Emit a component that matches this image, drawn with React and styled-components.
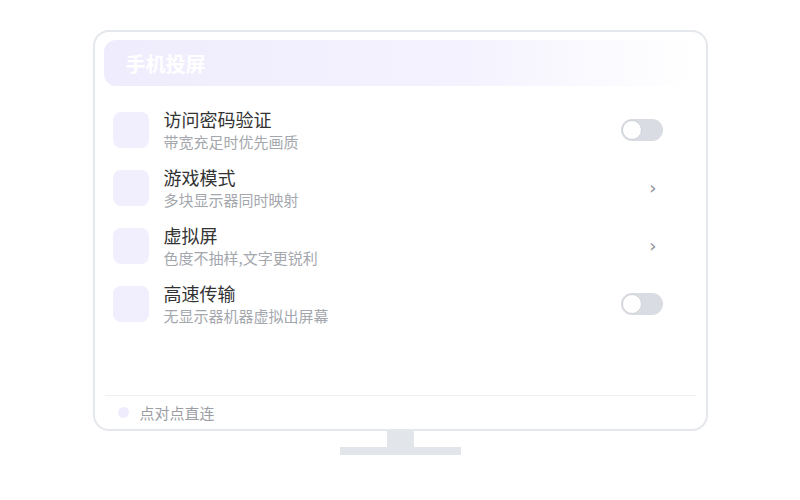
import React from "react";
import styled, { createGlobalStyle } from "styled-components";

const GlobalStyle = createGlobalStyle`
  body {
    margin: 0;
    background: #ffffff;
    font-family: "Noto Sans CJK SC", "Noto Sans", sans-serif;
  }
`;

const Page = styled.div`
  display: flex;
  flex-direction: column;
  align-items: center;
  width: 800px;
  height: 500px;
  padding-top: 30px;
  box-sizing: border-box;
`;

const Monitor = styled.div`
  display: flex;
  flex-direction: column;
  width: 615px;
  height: 401px;
  box-sizing: border-box;
  border: 2px solid #e4e7eb;
  border-radius: 16px;
  background: #ffffff;
  padding-top: 8px;
`;

const Header = styled.div`
  display: flex;
  align-items: center;
  height: 46px;
  margin: 0 10px 0 9px;
  padding-left: 22px;
  border-radius: 12px;
  background: linear-gradient(90deg, #efedfd 0%, #f4f2fe 60%, rgba(255, 255, 255, 0) 100%);
  color: #ffffff;
  font-size: 20px;
  font-weight: 700;
`;

const List = styled.div`
  display: flex;
  flex-direction: column;
  flex: 1;
  margin-top: 15px;
  padding: 0 43px 0 18px;
`;

const Row = styled.div`
  display: flex;
  align-items: center;
  height: 58px;
`;

const IconBox = styled.div`
  width: 36px;
  height: 36px;
  border-radius: 8px;
  background: #f1effd;
  flex-shrink: 0;
`;

const TextBlock = styled.div`
  display: flex;
  flex-direction: column;
  flex: 1;
  margin-left: 15px;
`;

const Title = styled.div`
  font-size: 18px;
  line-height: 23px;
  color: #333333;
`;

const Subtitle = styled.div`
  font-size: 15px;
  line-height: 21px;
  color: #a4a7ad;
`;

const Control = styled.div`
  display: flex;
  justify-content: flex-end;
  align-items: center;
  width: 42px;
`;

const Toggle = styled.div`
  position: relative;
  width: 42px;
  height: 22px;
  border-radius: 11px;
  background: #d9dce3;
  &::after {
    content: "";
    position: absolute;
    left: 1px;
    top: 1px;
    width: 18px;
    height: 18px;
    border-radius: 50%;
    background: #ffffff;
    border: 1px solid #cfd2d9;
  }
`;

const Chevron = styled.span`
  margin-right: 6px;
  font-size: 18px;
  line-height: 20px;
  color: #8c8f96;
  font-family: "DejaVu Sans", sans-serif;
`;

const Footer = styled.div`
  display: flex;
  align-items: center;
  height: 33px;
  margin: 0 10px;
  padding-left: 13px;
  border-top: 1px solid #eef0f3;
`;

const Dot = styled.span`
  width: 11px;
  height: 11px;
  border-radius: 50%;
  background: #efecfd;
`;

const FooterText = styled.span`
  margin-left: 11px;
  font-size: 15px;
  color: #9b9ea4;
`;

const Neck = styled.div`
  width: 27px;
  height: 16px;
  background: #e2e5e9;
`;

const Base = styled.div`
  width: 121px;
  height: 8px;
  background: #e2e5e9;
`;

const items = [
  { title: "访问密码验证", sub: "带宽充足时优先画质", type: "toggle" },
  { title: "游戏模式", sub: "多块显示器同时映射", type: "arrow" },
  { title: "虚拟屏", sub: "色度不抽样,文字更锐利", type: "arrow" },
  { title: "高速传输", sub: "无显示器机器虚拟出屏幕", type: "toggle" },
];

export default function App() {
  return (
    <>
      <GlobalStyle />
      <Page>
        <Monitor>
          <Header>手机投屏</Header>
          <List>
            {items.map((item) => (
              <Row key={item.title}>
                <IconBox />
                <TextBlock>
                  <Title>{item.title}</Title>
                  <Subtitle>{item.sub}</Subtitle>
                </TextBlock>
                <Control>
                  {item.type === "toggle" ? <Toggle /> : <Chevron>›</Chevron>}
                </Control>
              </Row>
            ))}
          </List>
          <Footer>
            <Dot />
            <FooterText>点对点直连</FooterText>
          </Footer>
        </Monitor>
        <Neck />
        <Base />
      </Page>
    </>
  );
}
